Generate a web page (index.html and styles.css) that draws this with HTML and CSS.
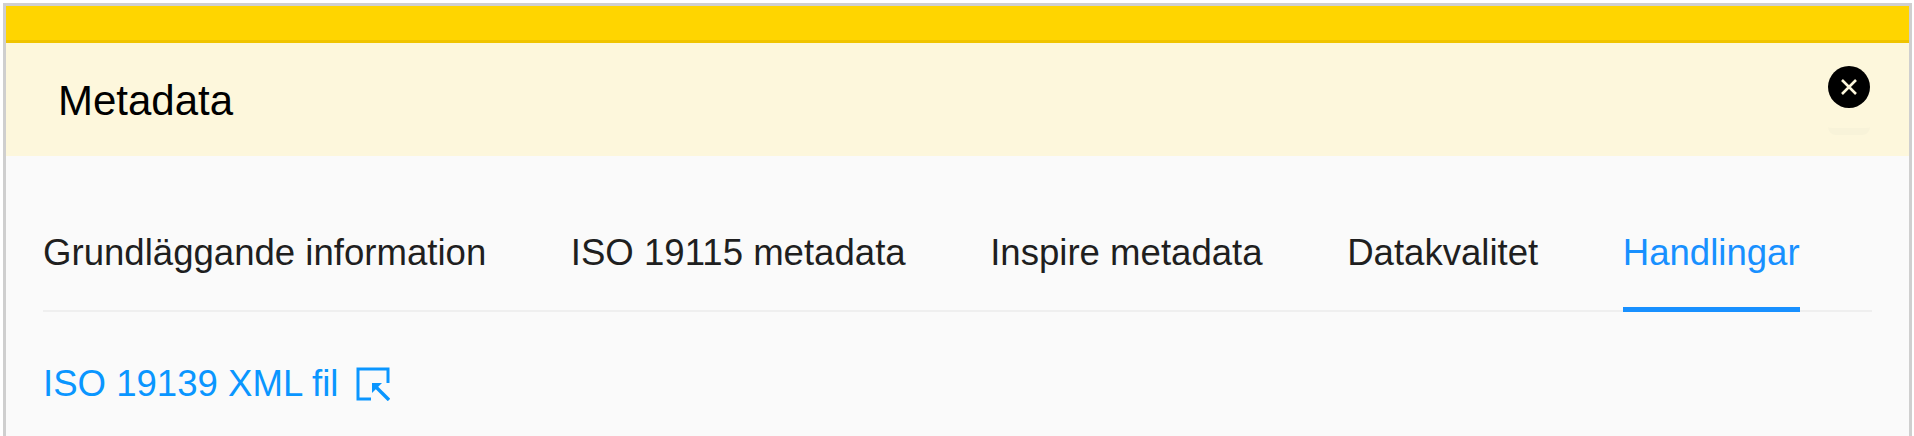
FILE: index.html
```html
<!DOCTYPE html>
<html lang="sv">
<head>
<meta charset="utf-8">
<title>Metadata</title>
<link rel="stylesheet" href="styles.css">
</head>
<body>
<div class="modal">
  <div class="stripe"></div>
  <header class="head">
    <h1 class="title">Metadata</h1>
    <div class="close-wrap">
      <button class="close" aria-label="Stäng">
        <svg viewBox="0 0 18 18" width="18" height="18"><path d="M2 2L16 16M16 2L2 16" stroke="#fdf7dc" stroke-width="2.6" fill="none"/></svg>
      </button>
    </div>
  </header>
  <main class="body">
    <nav class="tabs">
      <a class="tab">Grundläggande information</a>
      <a class="tab">ISO 19115 metadata</a>
      <a class="tab">Inspire metadata</a>
      <a class="tab">Datakvalitet</a>
      <a class="tab active">Handlingar</a>
    </nav>
    <a class="link">ISO 19139 XML fil
      <svg class="ext" viewBox="0 0 34 34" width="34" height="34"><path d="M15 32H2V2H32V16" stroke="#0a96ff" stroke-width="3" fill="none"/><path d="M33 33L20 20" stroke="#0a96ff" stroke-width="3.4" fill="none"/><path d="M16 16H26L16 26Z" fill="#0a96ff"/></svg>
    </a>
  </main>
</div>
</body>
</html>
```
FILE: styles.css
```css
* { box-sizing: border-box; }
html, body { margin: 0; height: 100%; overflow: hidden; background: #fff; }
body { padding: 3px 2px 0 3px; font-family: "Liberation Sans", Arial, sans-serif; }
.modal { height: 433px; border: 3px solid #cfcfcf; border-bottom: 0; background: #fafafa; display: flex; flex-direction: column; }
.stripe { height: 37px; background: #ffd500; border-bottom: 3px solid #f0c400; flex: none; }
.head { height: 113px; background: #fdf7dc; flex: none; display: flex; justify-content: space-between; padding: 0 39px 0 52px; }
.title { margin: 0; font-size: 42px; font-weight: 400; color: #000; line-height: 115px; }
.close-wrap { width: 42px; height: 80px; margin-top: 12px; padding-top: 11px; border-radius: 0 0 8px 8px; border-bottom: 7px solid #f8f3d9; }
.close { width: 42px; height: 42px; border: 0; padding: 0; border-radius: 50%; background: #000; display: flex; align-items: center; justify-content: center; }
.body { padding: 0 37px; flex: 1; }
.tabs { display: flex; gap: 84.5px; height: 105px; margin-top: 51px; border-bottom: 2px solid #efefef; }
.tab { display: flex; height: 105px; padding-top: 25px; font-size: 36.6px; line-height: 42px; color: #1f1f1f; }
.tab.active { color: #1890ff; border-bottom: 5px solid #1890ff; }
.link { display: flex; align-items: center; gap: 18px; margin-top: 51px; font-size: 36.6px; line-height: 42px; color: #0a96ff; }
```
